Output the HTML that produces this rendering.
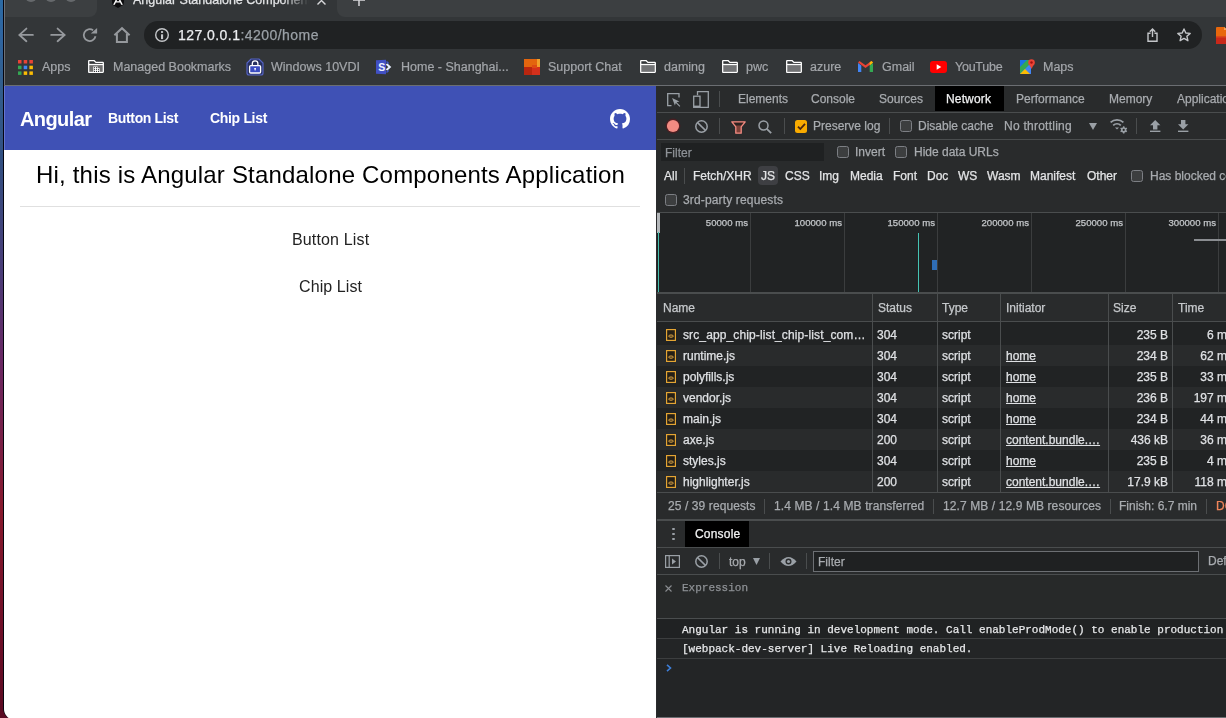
<!DOCTYPE html>
<html><head><meta charset="utf-8">
<style>
*{margin:0;padding:0;box-sizing:border-box}
html,body{width:1226px;height:718px;overflow:hidden;background:#202124}
body{position:relative;font-family:"Liberation Sans",sans-serif}
.a{position:absolute}
.t{position:absolute;white-space:nowrap;line-height:1;-webkit-text-stroke:0.25px currentColor;will-change:transform}
svg{position:absolute;overflow:visible}
#desk{left:0;top:0;width:14px;height:718px;background:linear-gradient(#2c6aa3 0%,#2f65a0 5%,#325e8c 12%,#325082 22%,#4a3c78 38%,#692864 50%,#87192d 71%,#6e0f28 88%,#5a0a22 100%)}
#edge{left:3px;top:0;width:14px;height:720px;background:#05050f;border-bottom-left-radius:12px}
#edge2{left:4px;top:0;width:1px;height:86px;background:#6e7175}
#strip{left:5px;top:0;width:1221px;height:17px;background:#333638}
#sl1{left:5px;top:0;width:92px;height:17px;background:#3c3f41;border-bottom-right-radius:8px}
#sl2{left:337px;top:0;width:889px;height:17px;background:#3c3f41;border-bottom-left-radius:8px}
#tb{left:5px;top:17px;width:1221px;height:68px;background:#333638}
#hline{left:4px;top:85px;width:1222px;height:1px;background:#6b6e72}
#page{left:4px;top:86px;width:652px;height:634px;background:#fff;border-bottom-left-radius:11px}
#mat{left:4px;top:86px;width:652px;height:64px;background:#3f51b5}
#dv{left:656px;top:86px;width:1px;height:632px;background:#2a2b2d}
#dt{left:657px;top:86px;width:569px;height:632px;background:#212324}
.dot{position:absolute;top:-10px;width:12px;height:12px;border-radius:50%;background:#66696c}
#pill{left:144px;top:21px;width:1058px;height:28px;border-radius:14px;background:#202223}
.bmt{position:absolute;top:59px;font-size:12.5px;color:#a3a6aa;white-space:nowrap;line-height:16px;-webkit-text-stroke:0.2px currentColor;will-change:transform}
</style></head><body>
<div class="a" id="desk"></div>
<div class="a" id="edge"></div>
<div class="a" id="strip"></div>
<div class="a" id="sl1"></div>
<div class="a" id="sl2"></div>
<div class="a" id="tb"></div>
<div class="a" id="edge2"></div>
<div class="a" id="hline"></div>
<!-- traffic lights -->
<div class="dot" style="left:25px"></div>
<div class="dot" style="left:45px"></div>
<div class="dot" style="left:65px"></div>
<!-- tab -->
<svg style="left:110.7px;top:-6.2px" width="14" height="14" viewBox="0 0 16 16"><path d="M8 0 L15.5 2.7 L14.3 12.4 L8 16 L1.7 12.4 L0.5 2.7Z" fill="#0c0c0e"/><path d="M8 1.5 L2.4 12.3 H4.4 L5.5 9.8 H10.5 L11.6 12.3 H13.6Z M6.3 8.2 L8 4.6 L9.7 8.2Z" fill="#fff"/></svg>
<div class="t" style="left:133px;top:-6.5px;font-size:12.5px;color:#e3e4e6;width:176px;overflow:hidden;-webkit-mask-image:linear-gradient(90deg,#000 150px,transparent 176px)">Angular Standalone Components Application</div>
<svg style="left:317px;top:-4px" width="9" height="9" viewBox="0 0 9 9"><path d="M0.5 0.5 L8.5 8.5 M8.5 0.5 L0.5 8.5" stroke="#d7d8da" stroke-width="1.4"/></svg>
<svg style="left:353px;top:-6px" width="12" height="12" viewBox="0 0 12 12"><path d="M6 0 V12 M0 6 H12" stroke="#d7d8da" stroke-width="1.5"/></svg>
<!-- nav icons -->
<svg style="left:17px;top:27px" width="18" height="16" viewBox="0 0 18 16"><path d="M15.9 7.9 H2.6 M9.4 1.6 L2.4 7.9 L9.4 14.2" stroke="#96999d" stroke-width="1.85" fill="none" stroke-linecap="round" stroke-linejoin="miter"/></svg>
<svg style="left:49px;top:27px" width="18" height="16" viewBox="0 0 18 16"><path d="M2.2 7.9 H15.4 M8.6 1.6 L15.6 7.9 L8.6 14.2" stroke="#96999d" stroke-width="1.85" fill="none" stroke-linecap="round" stroke-linejoin="miter"/></svg>
<svg style="left:82px;top:27px" width="16" height="16" viewBox="0 0 16 16"><path d="M11.1 3.3 A5.9 5.9 0 1 0 13.5 9.3" stroke="#96999d" stroke-width="1.8" fill="none"/><path d="M8.8 6.6 H15.1 V0.9Z" fill="#96999d"/></svg>
<svg style="left:113px;top:26px" width="18" height="18" viewBox="0 0 18 18"><path d="M1.4 9.3 L9 2.2 L16.6 9.3" stroke="#96999d" stroke-width="2" fill="none" stroke-linejoin="miter"/><path d="M3.9 7.6 V15.9 H13.9 V7.6" stroke="#96999d" stroke-width="2" fill="none"/></svg>
<div class="a" id="pill"></div>
<svg style="left:155px;top:28px" width="14" height="14" viewBox="0 0 14 14"><circle cx="7" cy="7" r="6.3" stroke="#c4c6c9" stroke-width="1.4" fill="none"/><rect x="6" y="6.3" width="2.1" height="4.8" fill="#c4c6c9"/><rect x="6" y="3.1" width="2.1" height="1.8" fill="#c4c6c9"/></svg>
<div class="t" style="left:178px;top:28.3px;font-size:14px;letter-spacing:0.45px;line-height:14px"><span style="color:#eceef0">127.0.0.1</span><span style="color:#9aa0a6">:4200/home</span></div>
<svg style="left:1147px;top:28px" width="11" height="14" viewBox="0 0 11 14"><path d="M3.5 5.2 H1 V13.2 H10 V5.2 H7.5" stroke="#c4c6c9" stroke-width="1.4" fill="none"/><path d="M5.5 9 V1.2 M2.8 3.8 L5.5 1 L8.2 3.8" stroke="#c4c6c9" stroke-width="1.4" fill="none"/></svg>
<svg style="left:1177px;top:28px" width="14" height="14" viewBox="0 0 14 14"><path d="M7 1 L8.8 5 L13.2 5.4 L9.9 8.3 L10.9 12.7 L7 10.4 L3.1 12.7 L4.1 8.3 L0.8 5.4 L5.2 5Z" stroke="#c4c6c9" stroke-width="1.4" fill="none" stroke-linejoin="round"/></svg>
<svg style="left:1216px;top:27px" width="12" height="17" viewBox="0 0 12 17"><path d="M1 0 H8 L12 3 V17 H1 Q0 17 0 16 V1 Q0 0 1 0Z" fill="#e8670c"/><rect x="0" y="10" width="12" height="7" fill="#c9281a"/><path d="M8 0 L12 3 H8Z" fill="#f4a35a"/><rect x="0" y="9" width="12" height="1.5" fill="#d9481a"/></svg>
<!-- bookmarks -->
<svg style="left:18px;top:60px" width="15" height="15" viewBox="0 0 15 15">
<rect x="0" y="0" width="3.5" height="3.5" fill="#ea4335"/><rect x="5.7" y="0" width="3.5" height="3.5" fill="#ea4335"/><rect x="11.4" y="0" width="3.5" height="3.5" fill="#ea4335"/>
<rect x="0" y="5.7" width="3.5" height="3.5" fill="#34a853"/><rect x="5.7" y="5.7" width="3.5" height="3.5" fill="#4285f4"/><rect x="11.4" y="5.7" width="3.5" height="3.5" fill="#fbbc04"/>
<rect x="0" y="11.4" width="3.5" height="3.5" fill="#34a853"/><rect x="5.7" y="11.4" width="3.5" height="3.5" fill="#fbbc04"/><rect x="11.4" y="11.4" width="3.5" height="3.5" fill="#fbbc04"/></svg>
<div class="bmt" style="left:42px">Apps</div>
<svg style="left:88px;top:59.8px" width="16" height="13" viewBox="0 0 16 13"><rect x="1.2" y="5" width="13.6" height="6.8" fill="#6e6e6e"/><path d="M1.2 0.7 H6.2 L7.9 2.4 H14.8 Q15.3 2.4 15.3 2.9 V11.8 Q15.3 12.3 14.8 12.3 H1.2 Q0.7 12.3 0.7 11.8 V1.2 Q0.7 0.7 1.2 0.7Z" stroke="#fff" stroke-width="1.3" fill="none"/><path d="M0.7 4.5 H15.3" stroke="#fff" stroke-width="1.3"/><path d="M5.3 6.4 H9.6 V8.3 H11.7 V12.3 H5.3Z" fill="#fff"/><circle cx="6.5" cy="7.7" r="0.6" fill="#333638"/><circle cx="8.5" cy="7.7" r="0.6" fill="#333638"/><circle cx="6.5" cy="9.6" r="0.6" fill="#333638"/><circle cx="8.5" cy="9.6" r="0.6" fill="#333638"/><circle cx="10.5" cy="9.6" r="0.6" fill="#333638"/><circle cx="6.5" cy="11.4" r="0.6" fill="#333638"/><circle cx="8.5" cy="11.4" r="0.6" fill="#333638"/><circle cx="10.5" cy="11.4" r="0.6" fill="#333638"/></svg>
<div class="bmt" style="left:113px">Managed Bookmarks</div>
<svg style="left:246px;top:58px" width="18" height="18" viewBox="0 0 18 18"><path d="M5 1 H13 L17 5 V15 Q17 17 15 17 H3 Q1 17 1 15 V5Z" fill="#27305e" stroke="#5563c4" stroke-width="1.2"/><rect x="3.6" y="7.6" width="11" height="7.4" rx="1.2" fill="#3b4cc0" stroke="#fff" stroke-width="1.3"/><path d="M6.3 7.6 V5.6 A2.8 2.8 0 0 1 11.9 5.6 V7.6" stroke="#fff" stroke-width="1.3" fill="none"/><path d="M8.2 10 H10 L9.5 12.5 H8.7Z" fill="#fff"/></svg>
<div class="bmt" style="left:271px">Windows 10VDI</div>
<svg style="left:376px;top:59px" width="17" height="16" viewBox="0 0 17 16"><path d="M0 1.3 L10 0.8 V15.2 L0 14.7Z" fill="#4150c4"/><path d="M10.5 5 L13.8 8 L10.5 11" stroke="#e8f0ff" stroke-width="2" fill="none"/><path d="M10.5 2.5 L12.6 4.6 M10.5 13.5 L12.6 11.4" stroke="#3f55c8" stroke-width="1.4"/><text x="2.2" y="12" font-size="10.5" font-weight="700" fill="#eef4ff" font-family="Liberation Sans">S</text></svg>
<div class="bmt" style="left:401px">Home - Shanghai...</div>
<svg style="left:524px;top:59px" width="16" height="16" viewBox="0 0 16 16"><rect width="16" height="16" fill="#d4301c"/><rect width="16" height="8" fill="#e3650e"/><rect x="13" width="3" height="8" fill="#f2a02a"/><rect x="0" y="8" width="8" height="8" fill="#b9260f"/><rect x="8" y="6" width="5" height="3" fill="#dd4a12"/></svg>
<div class="bmt" style="left:548px">Support Chat</div>
<svg style="left:640px;top:59.8px" width="16" height="13" viewBox="0 0 16 13"><rect x="1.2" y="5" width="13.6" height="6.8" rx="0.8" fill="#717274"/><path d="M1.2 0.7 H6.2 L7.9 2.4 H14.8 Q15.3 2.4 15.3 2.9 V11.8 Q15.3 12.3 14.8 12.3 H1.2 Q0.7 12.3 0.7 11.8 V1.2 Q0.7 0.7 1.2 0.7Z" stroke="#fff" stroke-width="1.3" fill="none"/><path d="M0.7 4.5 H15.3" stroke="#fff" stroke-width="1.3"/></svg>
<div class="bmt" style="left:664px">daming</div>
<svg style="left:722px;top:59.8px" width="16" height="13" viewBox="0 0 16 13"><rect x="1.2" y="5" width="13.6" height="6.8" rx="0.8" fill="#717274"/><path d="M1.2 0.7 H6.2 L7.9 2.4 H14.8 Q15.3 2.4 15.3 2.9 V11.8 Q15.3 12.3 14.8 12.3 H1.2 Q0.7 12.3 0.7 11.8 V1.2 Q0.7 0.7 1.2 0.7Z" stroke="#fff" stroke-width="1.3" fill="none"/><path d="M0.7 4.5 H15.3" stroke="#fff" stroke-width="1.3"/></svg>
<div class="bmt" style="left:746px">pwc</div>
<svg style="left:786px;top:59.8px" width="16" height="13" viewBox="0 0 16 13"><rect x="1.2" y="5" width="13.6" height="6.8" rx="0.8" fill="#717274"/><path d="M1.2 0.7 H6.2 L7.9 2.4 H14.8 Q15.3 2.4 15.3 2.9 V11.8 Q15.3 12.3 14.8 12.3 H1.2 Q0.7 12.3 0.7 11.8 V1.2 Q0.7 0.7 1.2 0.7Z" stroke="#fff" stroke-width="1.3" fill="none"/><path d="M0.7 4.5 H15.3" stroke="#fff" stroke-width="1.3"/></svg>
<div class="bmt" style="left:810px">azure</div>
<svg style="left:858px;top:61px" width="15" height="11" viewBox="0 0 15 11"><path d="M0 2 V11 H3.3 V4.5Z" fill="#4285f4"/><path d="M11.7 4.5 V11 H15 V2Z" fill="#34a853"/><path d="M0 1.5 L7.5 7 L15 1.5 L13.5 0 L7.5 4.3 L1.5 0Z" fill="#ea4335"/><path d="M15 1.5 L13.5 0 L11.7 1.2 V4.5Z" fill="#fbbc04"/></svg>
<div class="bmt" style="left:882px">Gmail</div>
<svg style="left:930px;top:61px" width="17" height="12" viewBox="0 0 17 12"><rect width="17" height="12" rx="3" fill="#ff0000"/><path d="M6.7 3.3 L11.3 6 L6.7 8.7Z" fill="#fff"/></svg>
<div class="bmt" style="left:955px;letter-spacing:-0.25px">YouTube</div>
<svg style="left:1020px;top:59px" width="15" height="15" viewBox="0 0 15 15"><path d="M0 1 H11 V15 H0Z" fill="#34a853"/><path d="M0 15 L11 4 V15Z" fill="#4285f4"/><path d="M0 15 L5 10 L10 15Z" fill="#fbbc04"/><path d="M0 1 H7 L0 8Z" fill="#1a73e8"/><circle cx="11.5" cy="3.5" r="3.3" fill="#ea4335"/><path d="M9 5 L11.5 10 L14 5Z" fill="#ea4335"/><circle cx="11.5" cy="3.5" r="1.2" fill="#a50e0e"/></svg>
<div class="bmt" style="left:1043px">Maps</div>

<div class="a" id="page"></div>
<div class="a" id="mat"></div>
<div class="a" style="left:4px;top:86px;width:1px;height:64px;background:#6676d0"></div>
<div class="t" style="left:20px;top:109px;font-size:20px;font-weight:700;-webkit-text-stroke:0;color:#fff;letter-spacing:-0.6px;line-height:20px">Angular</div>
<div class="t" style="left:108px;top:111px;font-size:14px;font-weight:700;color:#fff;letter-spacing:-0.34px;-webkit-text-stroke:0;line-height:14px">Button List</div>
<div class="t" style="left:210px;top:111px;font-size:14px;font-weight:700;color:#fff;letter-spacing:-0.32px;-webkit-text-stroke:0;line-height:14px">Chip List</div>
<svg style="left:610px;top:109px" width="20" height="20" viewBox="0 0 16 16"><path fill="#fff" d="M8 0C3.58 0 0 3.58 0 8c0 3.54 2.29 6.53 5.47 7.59.4.07.55-.17.55-.38 0-.19-.01-.82-.01-1.49-2.01.37-2.53-.49-2.69-.94-.09-.23-.48-.94-.82-1.13-.28-.15-.68-.52-.01-.53.63-.01 1.08.58 1.23.82.72 1.21 1.87.87 2.33.66.07-.52.28-.87.51-1.07-1.78-.2-3.64-.89-3.640-3.950 0-.87.31-1.590.82-2.150-.08-.2-.36-1.02.08-2.12 0 0 .67-.21 2.200.82.64-.18 1.320-.27 2-.27.68 0 1.360.09 2 .27 1.530-1.040 2.200-.82 2.200-.82.44 1.100.16 1.920.08 2.120.51.56.82 1.270.82 2.150 0 3.070-1.870 3.750-3.650 3.950.29.25.54.73.54 1.480 0 1.070-.01 1.930-.01 2.200 0 .21.15.46.55.38A8.013 8.013 0 0016 8c0-4.42-3.58-8-8-8z"/></svg>
<div class="t" style="left:36px;top:162.5px;font-size:24px;color:#000;-webkit-text-stroke:0;letter-spacing:0.19px;line-height:24px">Hi, this is Angular Standalone Components Application</div>
<div class="a" style="left:20px;top:206px;width:620px;height:1px;background:#e0e0e0"></div>
<div class="t" style="left:291.5px;top:231.5px;font-size:16px;-webkit-text-stroke:0;color:#222;letter-spacing:0.15px;line-height:16px">Button List</div>
<div class="t" style="left:298.5px;top:279.3px;font-size:16px;-webkit-text-stroke:0;color:#222;letter-spacing:0.1px;line-height:16px">Chip List</div>

<div class="a" id="dv"></div>
<!--DT-->
<div class="a" style="left:657px;top:86px;width:569px;height:632px;background:#212324;"></div>
<div class="a" style="left:657px;top:86px;width:569px;height:26px;background:#292b2c;"></div>
<div class="a" style="left:657px;top:112px;width:569px;height:1px;background:#4a4d4e;"></div>
<svg style="left:667px;top:93px" width="14" height="14" viewBox="0 0 14 14"><path d="M4.5 12.7 H0.7 V0.7 H12 V4.5" stroke="#9aa0a6" stroke-width="1.3" fill="none"/><path d="M5.1 5.1 L12.4 8.4 L9.6 9.3 L13.3 13 L12.5 13.8 L8.8 10.1 L7.9 12.5Z" fill="#9aa0a6"/></svg>
<svg style="left:693px;top:91px" width="16" height="17" viewBox="0 0 16 17"><path d="M4.5 4.2 V0.7 H15.3 V16.3 H7" stroke="#9aa0a6" stroke-width="1.3" fill="none"/><rect x="0.7" y="5.2" width="6.3" height="11.1" stroke="#9aa0a6" stroke-width="1.3" fill="none"/><rect x="0.7" y="14.6" width="6.3" height="1.7" fill="#9aa0a6"/></svg>
<div class="a" style="left:719px;top:91px;width:1px;height:16px;background:#4a4d4e;"></div>
<div class="t" style="left:737.6px;top:92.84px;font-size:12px;line-height:12px;color:#a8abaf;">Elements</div>
<div class="t" style="left:810.7px;top:92.84px;font-size:12px;line-height:12px;color:#a8abaf;">Console</div>
<div class="t" style="left:878.9px;top:92.84px;font-size:12px;line-height:12px;color:#a8abaf;">Sources</div>
<div class="t" style="left:1015.7px;top:92.84px;font-size:12px;line-height:12px;color:#a8abaf;">Performance</div>
<div class="t" style="left:1108.7px;top:92.84px;font-size:12px;line-height:12px;color:#a8abaf;">Memory</div>
<div class="t" style="left:1176.9px;top:92.84px;font-size:12px;line-height:12px;color:#a8abaf;">Application</div>
<div class="a" style="left:935px;top:86px;width:69px;height:25px;background:#000;"></div>
<div class="t" style="left:946.4px;top:92.84px;font-size:12px;line-height:12px;color:#f1f2f3;letter-spacing:0.15px;">Network</div>
<div class="a" style="left:657px;top:113px;width:569px;height:26px;background:#292b2c;"></div>
<div class="a" style="left:657px;top:139px;width:569px;height:1px;background:#4a4d4e;"></div>
<svg style="left:665px;top:118px" width="16" height="16" viewBox="0 0 16 16"><circle cx="8" cy="8" r="7.4" fill="#4a1f22"/><circle cx="8" cy="8" r="6.1" fill="#f28b82"/></svg>
<svg style="left:695px;top:119.5px" width="13" height="13" viewBox="0 0 13 13"><circle cx="6.5" cy="6.5" r="5.7" stroke="#9aa0a6" stroke-width="1.5" fill="none"/><path d="M2.6 2.6 L10.4 10.4" stroke="#9aa0a6" stroke-width="1.5"/></svg>
<div class="a" style="left:719px;top:118px;width:1px;height:16px;background:#4a4d4e;"></div>
<svg style="left:730.5px;top:120.5px" width="15" height="13" viewBox="0 0 15 13"><path d="M0.8 0.8 H14.2 L10.2 5.8 V12.2 H4.8 V5.8Z" stroke="#f28b82" stroke-width="1.3" fill="#7d4038" stroke-linejoin="round"/><path d="M2.6 1.8 H12.4 L10 4.6 H5Z" fill="#2e2221"/></svg>
<svg style="left:758px;top:120px" width="14" height="14" viewBox="0 0 14 14"><circle cx="5.5" cy="5.5" r="4.5" stroke="#9aa0a6" stroke-width="1.5" fill="none"/><path d="M8.8 8.8 L13.2 13.2" stroke="#9aa0a6" stroke-width="1.8"/></svg>
<div class="a" style="left:784px;top:118px;width:1px;height:16px;background:#4a4d4e;"></div>
<div class="a" style="left:794.5px;top:120px;width:12.5px;height:12.5px;background:#f9ab00;border-radius:2.5px;"></div>
<svg style="left:794.5px;top:120px" width="13" height="13" viewBox="0 0 13 13"><path d="M3 6.6 L5.3 9 L10 3.8" stroke="#4a2410" stroke-width="1.8" fill="none"/></svg>
<div class="t" style="left:813.2px;top:120.14px;font-size:12px;line-height:12px;color:#a8abaf;">Preserve log</div>
<div class="a" style="left:889px;top:118px;width:1px;height:16px;background:#4a4d4e;"></div>
<div class="a" style="left:900px;top:120.3px;width:12px;height:12px;background:#3c3e3f;border:1px solid #7c7f84;border-radius:2.5px;box-sizing:border-box;"></div>
<div class="t" style="left:918px;top:120.14px;font-size:12px;line-height:12px;color:#a8abaf;">Disable cache</div>
<div class="t" style="left:1004.4px;top:120.14px;font-size:12px;line-height:12px;color:#a8abaf;letter-spacing:0.25px;">No throttling</div>
<svg style="left:1089px;top:123px" width="8" height="7" viewBox="0 0 8 7"><path d="M0 0 H8 L4 7Z" fill="#9aa0a6"/></svg>
<svg style="left:1110px;top:118px" width="18" height="16" viewBox="0 0 18 16"><path d="M0.6 4.3 A9.6 9.6 0 0 1 13.4 4.3" stroke="#9aa0a6" stroke-width="1.8" fill="none"/><path d="M3.2 7.3 A5.6 5.6 0 0 1 10.8 7.3" stroke="#9aa0a6" stroke-width="1.8" fill="none"/><path d="M5 9.6 L9 9.6 L7 11.6Z" fill="#9aa0a6"/><rect x="12.95" y="8.3" width="1.5" height="7.2" fill="#9aa0a6" transform="rotate(0 13.7 11.9)"/><rect x="12.95" y="8.3" width="1.5" height="7.2" fill="#9aa0a6" transform="rotate(60 13.7 11.9)"/><rect x="12.95" y="8.3" width="1.5" height="7.2" fill="#9aa0a6" transform="rotate(120 13.7 11.9)"/><circle cx="13.7" cy="11.9" r="2.7" fill="#9aa0a6"/><circle cx="13.7" cy="11.9" r="1.1" fill="#292b2c"/></svg>
<div class="a" style="left:1136px;top:118px;width:1px;height:16px;background:#4a4d4e;"></div>
<svg style="left:1150px;top:120px" width="11" height="12" viewBox="0 0 11 12"><path d="M5.2 0 L10.4 5.2 H7.4 V9.4 H3 V5.2 H0Z" fill="#9aa0a6"/><rect x="0" y="10.6" width="10.4" height="1.4" fill="#9aa0a6"/></svg>
<svg style="left:1178px;top:120px" width="11" height="12" viewBox="0 0 11 12"><path d="M3 0 H7.4 V4.2 H10.4 L5.2 9.4 L0 4.2 H3Z" fill="#9aa0a6"/><rect x="0" y="10.6" width="10.4" height="1.4" fill="#9aa0a6"/></svg>
<div class="a" style="left:657px;top:140px;width:569px;height:72px;background:#292b2c;"></div>
<div class="a" style="left:661px;top:143px;width:163px;height:18px;background:#1f2122;"></div>
<div class="t" style="left:664.5px;top:146.84px;font-size:12px;line-height:12px;color:#8e9297;">Filter</div>
<div class="a" style="left:837px;top:146px;width:12px;height:12px;background:#3c3e3f;border:1px solid #7c7f84;border-radius:2.5px;box-sizing:border-box;"></div>
<div class="t" style="left:855.3px;top:146.34px;font-size:12px;line-height:12px;color:#a8abaf;">Invert</div>
<div class="a" style="left:895px;top:146px;width:12px;height:12px;background:#3c3e3f;border:1px solid #7c7f84;border-radius:2.5px;box-sizing:border-box;"></div>
<div class="t" style="left:913.5px;top:146.34px;font-size:12px;line-height:12px;color:#a8abaf;">Hide data URLs</div>
<div class="a" style="left:758px;top:166px;width:20px;height:19px;background:#3e3f43;border-radius:4px;"></div>
<div class="t" style="left:664px;top:169.84px;font-size:12px;line-height:12px;color:#e3e4e6;">All</div>
<div class="t" style="left:692.5px;top:169.84px;font-size:12px;line-height:12px;color:#e3e4e6;">Fetch/XHR</div>
<div class="t" style="left:760.7px;top:169.84px;font-size:12px;line-height:12px;color:#e3e4e6;">JS</div>
<div class="t" style="left:784.7px;top:169.84px;font-size:12px;line-height:12px;color:#e3e4e6;">CSS</div>
<div class="t" style="left:818.5px;top:169.84px;font-size:12px;line-height:12px;color:#e3e4e6;">Img</div>
<div class="t" style="left:849.6px;top:169.84px;font-size:12px;line-height:12px;color:#e3e4e6;">Media</div>
<div class="t" style="left:892.8px;top:169.84px;font-size:12px;line-height:12px;color:#e3e4e6;">Font</div>
<div class="t" style="left:926.6px;top:169.84px;font-size:12px;line-height:12px;color:#e3e4e6;">Doc</div>
<div class="t" style="left:958px;top:169.84px;font-size:12px;line-height:12px;color:#e3e4e6;">WS</div>
<div class="t" style="left:987px;top:169.84px;font-size:12px;line-height:12px;color:#e3e4e6;">Wasm</div>
<div class="t" style="left:1030.4px;top:169.84px;font-size:12px;line-height:12px;color:#e3e4e6;">Manifest</div>
<div class="t" style="left:1086.9px;top:169.84px;font-size:12px;line-height:12px;color:#e3e4e6;">Other</div>
<div class="a" style="left:684px;top:168px;width:1px;height:16px;background:#4a4d4e;"></div>
<div class="a" style="left:1131px;top:170px;width:12px;height:12px;background:#3c3e3f;border:1px solid #7c7f84;border-radius:2.5px;box-sizing:border-box;"></div>
<div class="t" style="left:1149.7px;top:169.84px;font-size:12px;line-height:12px;color:#a8abaf;">Has blocked cookies</div>
<div class="a" style="left:665px;top:194px;width:12px;height:12px;background:#3c3e3f;border:1px solid #7c7f84;border-radius:2.5px;box-sizing:border-box;"></div>
<div class="t" style="left:682.7px;top:193.64px;font-size:12px;line-height:12px;color:#a8abaf;letter-spacing:0.15px;">3rd-party requests</div>
<div class="a" style="left:657px;top:212px;width:569px;height:1px;background:#4a4d4e;"></div>
<div class="a" style="left:657px;top:213px;width:569px;height:79px;background:#212324;"></div>
<div class="a" style="left:750px;top:213px;width:1px;height:79px;background:#3b3d3e;"></div>
<div class="t" style="left:548px;width:200px;text-align:right;top:217.8px;font-size:9.6px;line-height:10px;color:#c4c7ca">50000 ms</div>
<div class="a" style="left:844px;top:213px;width:1px;height:79px;background:#3b3d3e;"></div>
<div class="t" style="left:642px;width:200px;text-align:right;top:217.8px;font-size:9.6px;line-height:10px;color:#c4c7ca">100000 ms</div>
<div class="a" style="left:937px;top:213px;width:1px;height:79px;background:#3b3d3e;"></div>
<div class="t" style="left:735px;width:200px;text-align:right;top:217.8px;font-size:9.6px;line-height:10px;color:#c4c7ca">150000 ms</div>
<div class="a" style="left:1031px;top:213px;width:1px;height:79px;background:#3b3d3e;"></div>
<div class="t" style="left:829px;width:200px;text-align:right;top:217.8px;font-size:9.6px;line-height:10px;color:#c4c7ca">200000 ms</div>
<div class="a" style="left:1125px;top:213px;width:1px;height:79px;background:#3b3d3e;"></div>
<div class="t" style="left:923px;width:200px;text-align:right;top:217.8px;font-size:9.6px;line-height:10px;color:#c4c7ca">250000 ms</div>
<div class="a" style="left:1218px;top:213px;width:1px;height:79px;background:#3b3d3e;"></div>
<div class="t" style="left:1016px;width:200px;text-align:right;top:217.8px;font-size:9.6px;line-height:10px;color:#c4c7ca">300000 ms</div>
<div class="a" style="left:657px;top:213px;width:2.5px;height:20px;background:#b4b7ba;"></div>
<div class="a" style="left:657.5px;top:232px;width:1.6px;height:60px;background:#45bfae;"></div>
<div class="a" style="left:918px;top:233px;width:1px;height:59px;background:#45c4b4;"></div>
<div class="a" style="left:932px;top:260px;width:5px;height:10px;background:#2f6db5;"></div>
<div class="a" style="left:1194px;top:239px;width:32px;height:2px;background:#8a8d91;"></div>
<div class="a" style="left:657px;top:292px;width:569px;height:2px;background:#4a4d4e;"></div>
<div class="a" style="left:657px;top:294px;width:569px;height:27px;background:#292b2c;"></div>
<div class="a" style="left:657px;top:321px;width:569px;height:1px;background:#4a4d4e;"></div>
<div class="t" style="left:662.6px;top:301.54px;font-size:12px;line-height:12px;color:#c6c9cc;">Name</div>
<div class="t" style="left:877.6px;top:301.54px;font-size:12px;line-height:12px;color:#c6c9cc;">Status</div>
<div class="t" style="left:942px;top:301.54px;font-size:12px;line-height:12px;color:#c6c9cc;">Type</div>
<div class="t" style="left:1005.6px;top:301.54px;font-size:12px;line-height:12px;color:#c6c9cc;">Initiator</div>
<div class="t" style="left:1112.7px;top:301.54px;font-size:12px;line-height:12px;color:#c6c9cc;">Size</div>
<div class="t" style="left:1177.6px;top:301.54px;font-size:12px;line-height:12px;color:#c6c9cc;">Time</div>
<div class="a" style="left:657px;top:322px;width:569px;height:2px;background:#212324;"></div>
<div class="a" style="left:657px;top:324px;width:569px;height:21px;background:#212324;"></div>
<svg style="left:666px;top:329px" width="10" height="12" viewBox="0 0 10 12"><rect x="0.6" y="0.6" width="8.8" height="10.8" stroke="#eaa935" stroke-width="1.15" fill="#241f16"/><ellipse cx="5" cy="7.1" rx="2.3" ry="1.15" stroke="#d9a040" stroke-width="1" fill="#3a3020"/></svg>
<div class="t" style="left:683px;top:329.04px;font-size:12px;line-height:12px;color:#dfe1e4;letter-spacing:0.12px;">src_app_chip-list_chip-list_com…</div>
<div class="t" style="left:877px;top:329.04px;font-size:12px;line-height:12px;color:#dfe1e4;">304</div>
<div class="t" style="left:942px;top:329.04px;font-size:12px;line-height:12px;color:#dfe1e4;">script</div>
<div class="t" style="left:968px;width:200px;text-align:right;top:329.04px;font-size:12px;line-height:12px;color:#dfe1e4">235 B</div>
<div class="t" style="left:1177px;width:56px;text-align:right;top:329.04px;font-size:12px;line-height:12px;color:#dfe1e4">6 ms</div>
<div class="a" style="left:657px;top:345px;width:569px;height:21px;background:#292b2c;"></div>
<svg style="left:666px;top:350px" width="10" height="12" viewBox="0 0 10 12"><rect x="0.6" y="0.6" width="8.8" height="10.8" stroke="#eaa935" stroke-width="1.15" fill="#241f16"/><ellipse cx="5" cy="7.1" rx="2.3" ry="1.15" stroke="#d9a040" stroke-width="1" fill="#3a3020"/></svg>
<div class="t" style="left:683px;top:350.04px;font-size:12px;line-height:12px;color:#dfe1e4;">runtime.js</div>
<div class="t" style="left:877px;top:350.04px;font-size:12px;line-height:12px;color:#dfe1e4;">304</div>
<div class="t" style="left:942px;top:350.04px;font-size:12px;line-height:12px;color:#dfe1e4;">script</div>
<div class="t" style="left:1005.5px;top:350.04px;font-size:12px;line-height:12px;color:#dfe1e4;text-decoration:underline;text-underline-offset:0.5px;">home</div>
<div class="t" style="left:968px;width:200px;text-align:right;top:350.04px;font-size:12px;line-height:12px;color:#dfe1e4">234 B</div>
<div class="t" style="left:1177px;width:56px;text-align:right;top:350.04px;font-size:12px;line-height:12px;color:#dfe1e4">62 ms</div>
<div class="a" style="left:657px;top:366px;width:569px;height:21px;background:#212324;"></div>
<svg style="left:666px;top:371px" width="10" height="12" viewBox="0 0 10 12"><rect x="0.6" y="0.6" width="8.8" height="10.8" stroke="#eaa935" stroke-width="1.15" fill="#241f16"/><ellipse cx="5" cy="7.1" rx="2.3" ry="1.15" stroke="#d9a040" stroke-width="1" fill="#3a3020"/></svg>
<div class="t" style="left:683px;top:371.04px;font-size:12px;line-height:12px;color:#dfe1e4;">polyfills.js</div>
<div class="t" style="left:877px;top:371.04px;font-size:12px;line-height:12px;color:#dfe1e4;">304</div>
<div class="t" style="left:942px;top:371.04px;font-size:12px;line-height:12px;color:#dfe1e4;">script</div>
<div class="t" style="left:1005.5px;top:371.04px;font-size:12px;line-height:12px;color:#dfe1e4;text-decoration:underline;text-underline-offset:0.5px;">home</div>
<div class="t" style="left:968px;width:200px;text-align:right;top:371.04px;font-size:12px;line-height:12px;color:#dfe1e4">235 B</div>
<div class="t" style="left:1177px;width:56px;text-align:right;top:371.04px;font-size:12px;line-height:12px;color:#dfe1e4">33 ms</div>
<div class="a" style="left:657px;top:387px;width:569px;height:21px;background:#292b2c;"></div>
<svg style="left:666px;top:392px" width="10" height="12" viewBox="0 0 10 12"><rect x="0.6" y="0.6" width="8.8" height="10.8" stroke="#eaa935" stroke-width="1.15" fill="#241f16"/><ellipse cx="5" cy="7.1" rx="2.3" ry="1.15" stroke="#d9a040" stroke-width="1" fill="#3a3020"/></svg>
<div class="t" style="left:683px;top:392.04px;font-size:12px;line-height:12px;color:#dfe1e4;">vendor.js</div>
<div class="t" style="left:877px;top:392.04px;font-size:12px;line-height:12px;color:#dfe1e4;">304</div>
<div class="t" style="left:942px;top:392.04px;font-size:12px;line-height:12px;color:#dfe1e4;">script</div>
<div class="t" style="left:1005.5px;top:392.04px;font-size:12px;line-height:12px;color:#dfe1e4;text-decoration:underline;text-underline-offset:0.5px;">home</div>
<div class="t" style="left:968px;width:200px;text-align:right;top:392.04px;font-size:12px;line-height:12px;color:#dfe1e4">236 B</div>
<div class="t" style="left:1177px;width:56px;text-align:right;top:392.04px;font-size:12px;line-height:12px;color:#dfe1e4">197 ms</div>
<div class="a" style="left:657px;top:408px;width:569px;height:21px;background:#212324;"></div>
<svg style="left:666px;top:413px" width="10" height="12" viewBox="0 0 10 12"><rect x="0.6" y="0.6" width="8.8" height="10.8" stroke="#eaa935" stroke-width="1.15" fill="#241f16"/><ellipse cx="5" cy="7.1" rx="2.3" ry="1.15" stroke="#d9a040" stroke-width="1" fill="#3a3020"/></svg>
<div class="t" style="left:683px;top:413.04px;font-size:12px;line-height:12px;color:#dfe1e4;">main.js</div>
<div class="t" style="left:877px;top:413.04px;font-size:12px;line-height:12px;color:#dfe1e4;">304</div>
<div class="t" style="left:942px;top:413.04px;font-size:12px;line-height:12px;color:#dfe1e4;">script</div>
<div class="t" style="left:1005.5px;top:413.04px;font-size:12px;line-height:12px;color:#dfe1e4;text-decoration:underline;text-underline-offset:0.5px;">home</div>
<div class="t" style="left:968px;width:200px;text-align:right;top:413.04px;font-size:12px;line-height:12px;color:#dfe1e4">234 B</div>
<div class="t" style="left:1177px;width:56px;text-align:right;top:413.04px;font-size:12px;line-height:12px;color:#dfe1e4">44 ms</div>
<div class="a" style="left:657px;top:429px;width:569px;height:21px;background:#292b2c;"></div>
<svg style="left:666px;top:434px" width="10" height="12" viewBox="0 0 10 12"><rect x="0.6" y="0.6" width="8.8" height="10.8" stroke="#eaa935" stroke-width="1.15" fill="#241f16"/><ellipse cx="5" cy="7.1" rx="2.3" ry="1.15" stroke="#d9a040" stroke-width="1" fill="#3a3020"/></svg>
<div class="t" style="left:683px;top:434.04px;font-size:12px;line-height:12px;color:#dfe1e4;">axe.js</div>
<div class="t" style="left:877px;top:434.04px;font-size:12px;line-height:12px;color:#dfe1e4;">200</div>
<div class="t" style="left:942px;top:434.04px;font-size:12px;line-height:12px;color:#dfe1e4;">script</div>
<div class="t" style="left:1005.5px;top:434.04px;font-size:12px;line-height:12px;color:#dfe1e4;text-decoration:underline;text-underline-offset:0.5px;">content.bundle.…</div>
<div class="t" style="left:968px;width:200px;text-align:right;top:434.04px;font-size:12px;line-height:12px;color:#dfe1e4">436 kB</div>
<div class="t" style="left:1177px;width:56px;text-align:right;top:434.04px;font-size:12px;line-height:12px;color:#dfe1e4">36 ms</div>
<div class="a" style="left:657px;top:450px;width:569px;height:21px;background:#212324;"></div>
<svg style="left:666px;top:455px" width="10" height="12" viewBox="0 0 10 12"><rect x="0.6" y="0.6" width="8.8" height="10.8" stroke="#eaa935" stroke-width="1.15" fill="#241f16"/><ellipse cx="5" cy="7.1" rx="2.3" ry="1.15" stroke="#d9a040" stroke-width="1" fill="#3a3020"/></svg>
<div class="t" style="left:683px;top:455.04px;font-size:12px;line-height:12px;color:#dfe1e4;">styles.js</div>
<div class="t" style="left:877px;top:455.04px;font-size:12px;line-height:12px;color:#dfe1e4;">304</div>
<div class="t" style="left:942px;top:455.04px;font-size:12px;line-height:12px;color:#dfe1e4;">script</div>
<div class="t" style="left:1005.5px;top:455.04px;font-size:12px;line-height:12px;color:#dfe1e4;text-decoration:underline;text-underline-offset:0.5px;">home</div>
<div class="t" style="left:968px;width:200px;text-align:right;top:455.04px;font-size:12px;line-height:12px;color:#dfe1e4">235 B</div>
<div class="t" style="left:1177px;width:56px;text-align:right;top:455.04px;font-size:12px;line-height:12px;color:#dfe1e4">4 ms</div>
<div class="a" style="left:657px;top:471px;width:569px;height:21px;background:#292b2c;"></div>
<svg style="left:666px;top:476px" width="10" height="12" viewBox="0 0 10 12"><rect x="0.6" y="0.6" width="8.8" height="10.8" stroke="#eaa935" stroke-width="1.15" fill="#241f16"/><ellipse cx="5" cy="7.1" rx="2.3" ry="1.15" stroke="#d9a040" stroke-width="1" fill="#3a3020"/></svg>
<div class="t" style="left:683px;top:476.04px;font-size:12px;line-height:12px;color:#dfe1e4;">highlighter.js</div>
<div class="t" style="left:877px;top:476.04px;font-size:12px;line-height:12px;color:#dfe1e4;">200</div>
<div class="t" style="left:942px;top:476.04px;font-size:12px;line-height:12px;color:#dfe1e4;">script</div>
<div class="t" style="left:1005.5px;top:476.04px;font-size:12px;line-height:12px;color:#dfe1e4;text-decoration:underline;text-underline-offset:0.5px;">content.bundle.…</div>
<div class="t" style="left:968px;width:200px;text-align:right;top:476.04px;font-size:12px;line-height:12px;color:#dfe1e4">17.9 kB</div>
<div class="t" style="left:1177px;width:56px;text-align:right;top:476.04px;font-size:12px;line-height:12px;color:#dfe1e4">118 ms</div>
<div class="a" style="left:872px;top:294px;width:1px;height:198px;background:#4a4d4e;"></div>
<div class="a" style="left:937px;top:294px;width:1px;height:198px;background:#4a4d4e;"></div>
<div class="a" style="left:1000px;top:294px;width:1px;height:198px;background:#4a4d4e;"></div>
<div class="a" style="left:1108px;top:294px;width:1px;height:198px;background:#4a4d4e;"></div>
<div class="a" style="left:1172px;top:294px;width:1px;height:198px;background:#4a4d4e;"></div>
<div class="a" style="left:657px;top:492px;width:569px;height:1px;background:#4a4d4e;"></div>
<div class="a" style="left:657px;top:493px;width:569px;height:26px;background:#292b2c;"></div>
<div class="a" style="left:657px;top:519px;width:569px;height:1.5px;background:#4a4d4e;"></div>
<div class="t" style="left:668px;top:499.94px;font-size:12px;line-height:12px;color:#a8abaf;letter-spacing:0.1px;">25 / 39 requests</div>
<div class="t" style="left:774.2px;top:499.94px;font-size:12px;line-height:12px;color:#a8abaf;letter-spacing:0.11px;">1.4 MB / 1.4 MB transferred</div>
<div class="t" style="left:942.6px;top:499.94px;font-size:12px;line-height:12px;color:#a8abaf;letter-spacing:0.1px;">12.7 MB / 12.9 MB resources</div>
<div class="t" style="left:1118.9px;top:499.94px;font-size:12px;line-height:12px;color:#a8abaf;letter-spacing:0px;">Finish: 6.7 min</div>
<div class="a" style="left:764px;top:499px;width:1px;height:15px;background:#4a4d4e;"></div>
<div class="a" style="left:933px;top:499px;width:1px;height:15px;background:#4a4d4e;"></div>
<div class="a" style="left:1110px;top:499px;width:1px;height:15px;background:#4a4d4e;"></div>
<div class="a" style="left:1206px;top:499px;width:1px;height:15px;background:#4a4d4e;"></div>
<div class="t" style="left:1215.7px;top:499.94px;font-size:12px;line-height:12px;color:#f0845a;">DOMContentLoaded</div>
<div class="a" style="left:657px;top:520.5px;width:569px;height:27px;background:#292b2c;"></div>
<div class="a" style="left:672px;top:527.8px;width:2.5px;height:2.5px;background:#9aa0a6;border-radius:50%;"></div>
<div class="a" style="left:672px;top:532.8px;width:2.5px;height:2.5px;background:#9aa0a6;border-radius:50%;"></div>
<div class="a" style="left:672px;top:537.8px;width:2.5px;height:2.5px;background:#9aa0a6;border-radius:50%;"></div>
<div class="a" style="left:685px;top:521px;width:64px;height:25.6px;background:#000;"></div>
<div class="t" style="left:694.8px;top:527.54px;font-size:12px;line-height:12px;color:#f1f2f3;letter-spacing:0.2px;">Console</div>
<div class="a" style="left:657px;top:547px;width:569px;height:1px;background:#4a4d4e;"></div>
<div class="a" style="left:657px;top:548px;width:569px;height:26px;background:#292b2c;"></div>
<div class="a" style="left:657px;top:574px;width:569px;height:1px;background:#4a4d4e;"></div>
<svg style="left:665px;top:555px" width="15" height="13" viewBox="0 0 15 13"><rect x="0.6" y="0.6" width="13.8" height="11.8" stroke="#9aa0a6" stroke-width="1.2" fill="none"/><path d="M4.2 0.6 V12.4" stroke="#9aa0a6" stroke-width="1.2"/><path d="M7 3.5 L11 6.5 L7 9.5Z" fill="#9aa0a6"/></svg>
<svg style="left:695px;top:554.5px" width="13" height="13" viewBox="0 0 13 13"><circle cx="6.5" cy="6.5" r="5.7" stroke="#9aa0a6" stroke-width="1.5" fill="none"/><path d="M2.6 2.6 L10.4 10.4" stroke="#9aa0a6" stroke-width="1.5"/></svg>
<div class="a" style="left:719px;top:553px;width:1px;height:16px;background:#4a4d4e;"></div>
<div class="t" style="left:729px;top:555.84px;font-size:12px;line-height:12px;color:#a8abaf;">top</div>
<svg style="left:753px;top:557.5px" width="7" height="7" viewBox="0 0 7 7"><path d="M0 0 H7 L3.5 7Z" fill="#9aa0a6"/></svg>
<div class="a" style="left:769px;top:553px;width:1px;height:16px;background:#4a4d4e;"></div>
<svg style="left:780px;top:555.5px" width="17" height="11" viewBox="0 0 17 11"><path d="M0.5 5.5 Q8.5 -3.5 16.5 5.5 Q8.5 14.5 0.5 5.5Z" fill="#9aa0a6"/><circle cx="8.5" cy="5.5" r="3" fill="#292b2c"/><circle cx="8.5" cy="5.5" r="1.6" fill="#9aa0a6"/></svg>
<div class="a" style="left:806px;top:553px;width:1px;height:16px;background:#4a4d4e;"></div>
<div class="a" style="left:813px;top:551px;width:386px;height:21px;background:#1f2122;border:1px solid #6c6f73;box-sizing:border-box;"></div>
<div class="t" style="left:818px;top:555.84px;font-size:12px;line-height:12px;color:#a8abaf;">Filter</div>
<div class="t" style="left:1207.7px;top:554.84px;font-size:12px;line-height:12px;color:#a8abaf;">Default levels</div>
<div class="a" style="left:657px;top:575px;width:569px;height:142px;background:#272929;"></div>
<svg style="left:665px;top:585px" width="7" height="7" viewBox="0 0 7 7"><path d="M0.5 0.5 L6.5 6.5 M6.5 0.5 L0.5 6.5" stroke="#8a8d91" stroke-width="1.1"/></svg>
<div class="t" style="left:681.7px;top:582.57px;font-size:11px;line-height:11px;color:#8e9195;font-family:'Liberation Mono',monospace;">Expression</div>
<div class="a" style="left:657px;top:618px;width:569px;height:1px;background:#4a4d4e;"></div>
<div class="a" style="left:657px;top:619px;width:569px;height:19px;background:#202223;"></div>
<div class="t" style="left:681.7px;top:624.57px;font-size:11px;line-height:11px;color:#e6e7e9;font-family:'Liberation Mono',monospace;">Angular is running in development mode. Call enableProdMode() to enable production mode.</div>
<div class="a" style="left:657px;top:638px;width:569px;height:1px;background:#3c3e3f;"></div>
<div class="a" style="left:657px;top:639px;width:569px;height:19px;background:#232526;"></div>
<div class="a" style="left:657px;top:658.5px;width:569px;height:58.5px;background:#232526;"></div>
<div class="t" style="left:681.7px;top:643.57px;font-size:11px;line-height:11px;color:#e6e7e9;font-family:'Liberation Mono',monospace;">[webpack-dev-server] Live Reloading enabled.</div>
<div class="a" style="left:657px;top:657.5px;width:569px;height:1px;background:#3c3e3f;"></div>
<svg style="left:666px;top:663.8px" width="6" height="8" viewBox="0 0 6 8"><path d="M1 0.8 L4.5 4 L1 7.2" stroke="#3d7fd9" stroke-width="1.6" fill="none"/></svg>
<div class="a" style="left:657px;top:717px;width:569px;height:1px;background:#6b6e72;"></div>
<!--/DT-->
</body></html>
